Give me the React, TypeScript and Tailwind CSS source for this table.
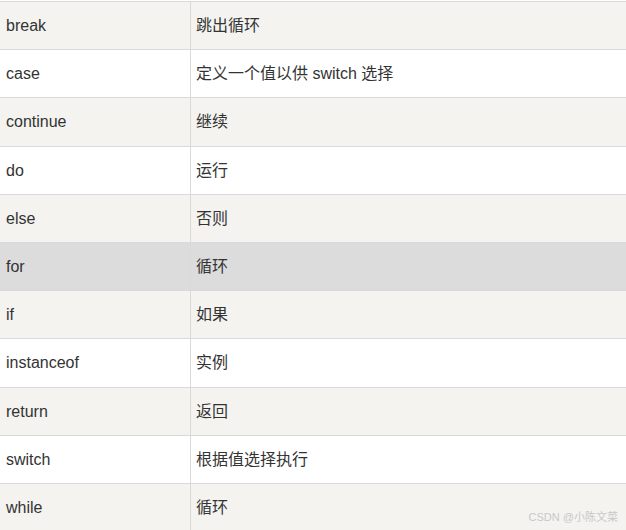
const ROWS: [string, string][] = [
  ["break", "跳出循环"],
  ["case", "定义一个值以供 switch 选择"],
  ["continue", "继续"],
  ["do", "运行"],
  ["else", "否则"],
  ["for", "循环"],
  ["if", "如果"],
  ["instanceof", "实例"],
  ["return", "返回"],
  ["switch", "根据值选择执行"],
  ["while", "循环"],
];

export default function App() {
  return (
    <div
      className="relative h-[530px] w-[626px] overflow-hidden bg-white pt-px text-[16px] text-[#333]"
      style={{ fontFamily: '"Liberation Sans", Arial, "Noto Sans CJK SC", sans-serif' }}
    >
      <div className="border-t border-[#d9d9d9]">
        {ROWS.map(([kw, desc], i) => (
          <div
            key={kw}
            className={`flex h-[48.2px] border-b border-[#d9d9d9] ${
              kw === "for" ? "bg-[#dcdcdc]" : i % 2 === 0 ? "bg-[#f4f3f0]" : "bg-white"
            }`}
          >
            <div className="flex w-[191px] items-center border-r border-[#d9d9d9] pl-[6px] pt-px">{kw}</div>
            <div className="flex flex-1 items-center pl-[5px] pt-px">{desc}</div>
          </div>
        ))}
      </div>
      {/* watermark */}
      <div className="absolute bottom-[5px] right-[8px] text-[11px] text-[#c8c8c8]">CSDN @小陈文菜</div>
    </div>
  );
}
